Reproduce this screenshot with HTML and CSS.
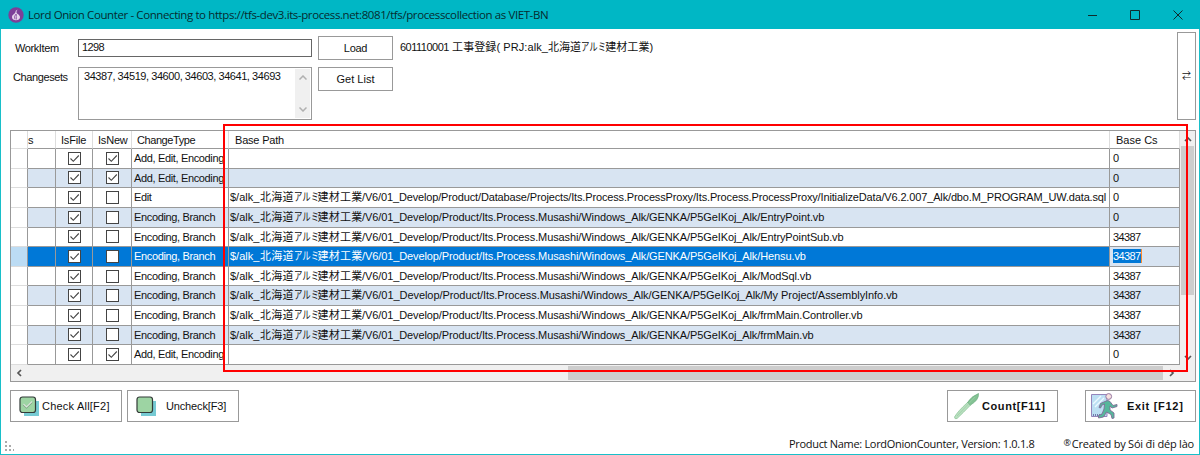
FILE: index.html
```html
<!DOCTYPE html>
<html lang="en">
<head>
<meta charset="utf-8">
<title>Lord Onion Counter</title>
<link rel="stylesheet" href="styles.css">
</head>
<body>
<svg class="defs" width="0" height="0">
  <symbol id="on" viewBox="0 0 13 13"><rect x=".5" y=".5" width="12" height="12" fill="#fff" stroke="#444"/><path d="M2.5 6.5 5.3 9.3 10.8 3.5" fill="none" stroke="#444" stroke-width="1.1"/></symbol>
  <symbol id="off" viewBox="0 0 13 13"><rect x=".5" y=".5" width="12" height="12" fill="#fff" stroke="#444"/></symbol>
</svg>
<div class="window">
  <header class="titlebar">
    <svg class="logo" viewBox="0 0 16 16"><circle cx="8" cy="8" r="7.7" fill="#7d3f98"/><path d="M9.6 2.5Q8.3 4 8.5 5.7C9 7 12 7.6 12 10.2C12 12.2 10.2 13.2 8 13.2S4 12.2 4 10.2C4 7.8 6.8 7 7.3 5.6Q7.2 3.6 9.6 2.5Z" fill="#e6d5ec"/><path d="M8 7Q5.4 9.4 7 12.3M8.4 7.2Q8 9.5 8.4 12.5" fill="none" stroke="#7d3f98" stroke-width=".8"/></svg>
    <span class="caption">Lord Onion Counter - Connecting to https://tfs-dev3.its-process.net:8081/tfs/processcollection as VIET-BN</span>
    <svg class="winbtns" viewBox="0 0 100 12"><path d="M1 6.5h9M43.5 1.5h9v9h-9zM86.5 1.5l9 9M95.500 1.500l-9 9" fill="none" stroke="#102a2c"/></svg>
  </header>

  <main class="client">
    <section class="form">
      <div class="fields">
        <label class="lbl wi">WorkItem</label>
        <div class="input num">1298</div>
        <div class="btn small"><span class="load">Load</span></div>
        <div class="item"><span class="num">601110001</span> 工事登録( PRJ:alk_北海道<span class="kana">アルミ</span>建材工業)</div>
        <label class="lbl cs">Changesets</label>
        <div class="area"><span class="list">34387, 34519, 34600, 34603, 34641, 34693</span>
          <div class="areabar"><svg viewBox="0 0 8 5"><path d="M.5 4.500 4 1l3.500 3.500"/></svg><svg viewBox="0 0 8 5"><path d="M.5.5 4 4 7.500.5"/></svg></div>
        </div>
        <div class="btn small"><span class="getlist">Get List</span></div>
      </div>
      <div class="btn swap">⇄</div>
    </section>

    <section class="gridbox">
      <div class="gridmain">
        <div class="table">
          <div class="row head"><i></i><b class="s">s</b><b class="f">IsFile</b><b class="n">IsNew</b><b class="t">ChangeType</b><b class="p">Base Path</b><b class="c">Base Cs</b></div>
          <div class="row"><i></i><b></b><b class="k"><svg><use href="#on"/></svg></b><b class="k"><svg><use href="#on"/></svg></b><b class="type">Add, Edit, Encoding</b><b></b><b class="num">0</b></div>
          <div class="row alt"><i></i><b></b><b class="k"><svg><use href="#on"/></svg></b><b class="k"><svg><use href="#on"/></svg></b><b class="type">Add, Edit, Encoding</b><b></b><b class="num">0</b></div>
          <div class="row"><i></i><b></b><b class="k"><svg><use href="#on"/></svg></b><b class="k"><svg><use href="#off"/></svg></b><b class="type">Edit</b><b class="path"><span class="pre">$/alk_</span><span class="jp">北海道<span class="kana">アルミ</span>建材工業</span><span class="long">/V6/01_Develop/Product/Database/Projects/Its.Process.ProcessProxy/Its.Process.ProcessProxy/InitializeData/V6.2.007_Alk/dbo.M_PROGRAM_UW.data.sql</span></b><b class="num">0</b></div>
          <div class="row alt"><i></i><b></b><b class="k"><svg><use href="#on"/></svg></b><b class="k"><svg><use href="#off"/></svg></b><b class="type">Encoding, Branch</b><b class="path"><span class="pre">$/alk_</span><span class="jp">北海道<span class="kana">アルミ</span>建材工業</span><span class="file">/V6/01_Develop/Product/Its.Process.Musashi/Windows_Alk/GENKA/P5GeIKoj_Alk/EntryPoint.vb</span></b><b class="num">0</b></div>
          <div class="row"><i></i><b></b><b class="k"><svg><use href="#on"/></svg></b><b class="k"><svg><use href="#off"/></svg></b><b class="type">Encoding, Branch</b><b class="path"><span class="pre">$/alk_</span><span class="jp">北海道<span class="kana">アルミ</span>建材工業</span><span class="file">/V6/01_Develop/Product/Its.Process.Musashi/Windows_Alk/GENKA/P5GeIKoj_Alk/EntryPointSub.vb</span></b><b class="num">34387</b></div>
          <div class="row sel"><i></i><b></b><b class="k"><svg><use href="#on"/></svg></b><b class="k"><svg><use href="#off"/></svg></b><b class="type">Encoding, Branch</b><b class="path"><span class="pre">$/alk_</span><span class="jp">北海道<span class="kana">アルミ</span>建材工業</span><span class="file">/V6/01_Develop/Product/Its.Process.Musashi/Windows_Alk/GENKA/P5GeIKoj_Alk/Hensu.vb</span></b><b class="num edit"><span>34387</span></b></div>
          <div class="row"><i></i><b></b><b class="k"><svg><use href="#on"/></svg></b><b class="k"><svg><use href="#off"/></svg></b><b class="type">Encoding, Branch</b><b class="path"><span class="pre">$/alk_</span><span class="jp">北海道<span class="kana">アルミ</span>建材工業</span><span class="file">/V6/01_Develop/Product/Its.Process.Musashi/Windows_Alk/GENKA/P5GeIKoj_Alk/ModSql.vb</span></b><b class="num">34387</b></div>
          <div class="row alt"><i></i><b></b><b class="k"><svg><use href="#on"/></svg></b><b class="k"><svg><use href="#off"/></svg></b><b class="type">Encoding, Branch</b><b class="path"><span class="pre">$/alk_</span><span class="jp">北海道<span class="kana">アルミ</span>建材工業</span><span class="file wide">/V6/01_Develop/Product/Its.Process.Musashi/Windows_Alk/GENKA/P5GeIKoj_Alk/My Project/AssemblyInfo.vb</span></b><b class="num">34387</b></div>
          <div class="row"><i></i><b></b><b class="k"><svg><use href="#on"/></svg></b><b class="k"><svg><use href="#off"/></svg></b><b class="type">Encoding, Branch</b><b class="path"><span class="pre">$/alk_</span><span class="jp">北海道<span class="kana">アルミ</span>建材工業</span><span class="file">/V6/01_Develop/Product/Its.Process.Musashi/Windows_Alk/GENKA/P5GeIKoj_Alk/frmMain.Controller.vb</span></b><b class="num">34387</b></div>
          <div class="row alt"><i></i><b></b><b class="k"><svg><use href="#on"/></svg></b><b class="k"><svg><use href="#off"/></svg></b><b class="type">Encoding, Branch</b><b class="path"><span class="pre">$/alk_</span><span class="jp">北海道<span class="kana">アルミ</span>建材工業</span><span class="file">/V6/01_Develop/Product/Its.Process.Musashi/Windows_Alk/GENKA/P5GeIKoj_Alk/frmMain.vb</span></b><b class="num">34387</b></div>
          <div class="row"><i></i><b></b><b class="k"><svg><use href="#on"/></svg></b><b class="k"><svg><use href="#on"/></svg></b><b class="type">Add, Edit, Encoding</b><b></b><b class="num">0</b></div>
        </div>
        <div class="vbar"><svg viewBox="0 0 8 6"><path d="M1 5 4 2l3 3"/></svg><div class="vthumb"></div><svg viewBox="0 0 8 6"><path d="M1 1l3 3 3-3"/></svg></div>
      </div>
      <div class="hbar"><svg viewBox="0 0 6 8"><path d="M5 1 2 4l3 3"/></svg><div class="hthumb"></div><svg viewBox="0 0 6 8"><path d="M1 1l3 3-3 3"/></svg></div>
      <div class="highlight"></div>
    </section>

    <section class="actions">
      <div class="btn act">
        <svg class="sq" viewBox="0 0 21 21"><path d="M5 5h15v15H5z" fill="#76cad3"/><rect x="1" y="1" width="15.500" height="15.500" rx="2.500" fill="#9dd4a3" stroke="#333b38" stroke-width="1.200"/><path d="M4.500 8.500 7.500 11.500 13 6" fill="none" stroke="#7d9f84" stroke-width="1.800"/><path d="M4.500 8 7.500 11 13 5.500" fill="none" stroke="#dce9dc" stroke-width="1.200"/></svg>
        <span class="chk">Check All[F2]</span></div>
      <div class="btn act">
        <svg class="sq" viewBox="0 0 21 21"><path d="M5 5h15v15H5z" fill="#76cad3"/><rect x="1" y="1" width="15.500" height="15.500" rx="2.500" fill="#9dd4a3" stroke="#333b38" stroke-width="1.200"/></svg>
        <span class="unchk">Uncheck[F3]</span></div>
      <div class="spacer"></div>
      <div class="btn act count">
        <svg class="pen" viewBox="0 0 28 28"><path d="M1.500 25Q5 19 14.500 10.500L17.500 13Q10 21 4 26.500Q1.500 27.500 1.500 25Z" fill="#b9dfbf" stroke="#91c89d" stroke-width=".8"/><path d="M14.500 10.500Q18 4.500 25.500 1.500Q26 8 17.500 13Z" fill="#83c293" stroke="#68aa7d" stroke-width=".7"/><path d="M4 24 22 5" stroke="#9bcfa6" stroke-width=".8"/></svg>
        <span>Count[F11]</span></div>
      <div class="btn act exit">
        <svg class="run" viewBox="0 0 28 28"><path d="M1.500 2.500h15.500v22H1.500z" fill="#bcdff3" stroke="#9585bb"/><path d="M3 12 11 4M5 15 14 6" stroke="#edf8ff" stroke-width="1.400"/><path d="M3 23h11" stroke="#7179ab" stroke-width="2" stroke-dasharray="1 1"/><path d="M15 9.500q3-2 5 0l3 4 4-1v2l-5 1.500-2-2v4l4 3v5l-2 .5-1-4-4.500-2.500-3 5-5 1v-2.500l3.500-1.500 2-5 .5-5-2.500 1-1.500 3-1.500-.5 1.500-4z" fill="#55b79b" stroke="#806b96" stroke-width=".9"/><circle cx="18.700" cy="4.500" r="2.900" fill="#f6e1df" stroke="#9576a2"/></svg>
        <span>Exit [F12]</span></div>
    </section>

    <footer class="status">
      <svg class="grip" viewBox="0 0 10 10"><path d="M1 0h2v2H1zM1 4h2v2H1zM5 4h2v2H5zM1 8h2v2H1zM5 8h2v2H5zM9 8h1v2H9z" fill="#aaa"/></svg>
      <span class="product">Product Name: LordOnionCounter, Version: 1.0.1.8</span>
      <span class="author"><small>®</small>Created by Sói đi dép lào</span>
    </footer>
  </main>
</div>
</body>
</html>
```

FILE: styles.css
```css
* { box-sizing: border-box; }
body { margin: 0; background: #fff; color: #111; font: 11px/14px "Liberation Sans", "Noto Sans CJK JP", sans-serif; }
svg { display: block; flex: none; }
.defs { position: absolute; }
.window { width: 1200px; height: 455px; display: flex; flex-direction: column; overflow: hidden; }
.titlebar { height: 29px; flex: none; display: flex; align-items: center; padding: 0 13px 0 8px; background: #00b7c5; color: #062b2f; }
.logo { width: 16px; height: 16px; }
.caption { margin-left: 4px; font: 11.5px/16px "Open Sans", sans-serif; white-space: nowrap; letter-spacing: -.4px; }
.winbtns { width: 100px; height: 12px; margin-left: auto; }

.client { flex: 1; display: flex; flex-direction: column; border: 1px solid #18bfc9; border-top: 0; padding: 3px 3px 0 9px; }
.form { display: flex; justify-content: space-between; height: 98px; }
.fields { display: grid; grid-template-columns: 68px 234px 75px 300px; column-gap: 0; grid-template-rows: 24px 53px; row-gap: 7px; padding-top: 4px; }
.fields .btn { margin-left: 6px; width: 75px; }
.fields .small { height: 24px; }
.lbl { padding-top: 5px; white-space: nowrap; letter-spacing: -.4px; }
.wi { padding-left: 5px; }
.cs { padding-left: 3px; padding-top: 3px; }
.num { letter-spacing: -.62px; }
.list { letter-spacing: -.44px; }
.input { height: 18px; margin-top: 3px; border: 1px solid #666; padding: 0 3px; }
.area { position: relative; border: 1px solid #999; padding: 1px 0 0 5px; white-space: nowrap; letter-spacing: 0; }
.areabar { position: absolute; top: 1px; right: 1px; bottom: 1px; width: 15px; background: #f0f0f0; display: flex; flex-direction: column; justify-content: space-between; align-items: center; padding: 6px 0; }
.areabar svg { width: 8px; height: 5px; fill: none; stroke: #b0b0b0; stroke-width: 1.5; }
.btn { border: 1px solid #999; background: #fff; display: flex; align-items: center; justify-content: center; white-space: nowrap; }
.load { letter-spacing: -.3px; }
.item { padding: 4px 0 0 13px; white-space: nowrap; letter-spacing: .08px; }
.item .num { letter-spacing: -.5px; }
.swap { width: 19px; height: 88px; font-size: 9px; }
.kana { display: inline-block; width: 24px; transform: scaleX(.76); transform-origin: left; white-space: nowrap; letter-spacing: 0; line-height: 14px; }

.gridbox { position: relative; height: 252px; border: 1px solid #999; background: #f0f0f0; width: 1186px; }
.gridmain { display: flex; height: 234px; }
.table { width: 1169px; background: #fff; }
.row { height: 19.636px; display: grid; grid-template-columns: 17px 28px 37px 39px 97px 881px 70px; }
.row.head { height: 18px; }
.row > * { border-right: 1px solid #999; border-bottom: 1px solid #999; font-weight: normal; font-style: normal; white-space: nowrap; overflow: hidden; padding-left: 2px; line-height: 19px; }
.row > i { border-bottom-color: #ddd; }
.row.head > * { line-height: 18px; border-right-color: #ddd; }
.alt > b { background: #d8e4f2; }
.sel > i { background: #bcdcf4; }
.sel > b { background: #0078d7; color: #fff; }
.row > .s { padding-left: 0; }
.row > .f, .row > .n { padding-left: 5px; letter-spacing: -.2px; }
.row > .t { padding-left: 5px; letter-spacing: -.42px; }
.row > .p { padding-left: 6px; letter-spacing: -.2px; }
.row > .c { padding-left: 6px; }
.row > .num { padding-left: 3px; }
.type { letter-spacing: -.35px; }
.row > .k { display: flex; align-items: center; justify-content: center; padding: 0; }
.k svg { width: 13px; height: 13px; }
.row > .path { display: flex; padding-left: 1px; }
.pre { width: 30px; }
.jp { width: 102px; letter-spacing: .2px; }
.file { letter-spacing: -.105px; }
.wide { letter-spacing: -.06px; }
.long { letter-spacing: -.148px; }
.row > .edit { background: #d8e4f2; }
.edit span { display: inline-block; height: 14px; line-height: 14px; background: #0078d7; border-right: 1px solid #ff8b2b; }
.vbar { width: 15px; display: flex; flex-direction: column; align-items: center; padding: 5px 0 4px; }
.vbar svg, .hbar svg { fill: none; stroke: #555; stroke-width: 1.7; }
.vbar svg { width: 8px; height: 6px; }
.vthumb { width: 13px; height: 149px; background: #cdcdcd; margin: 4px 0 auto; }
.hbar { height: 15px; display: flex; align-items: center; padding: 0 20px 0 5px; }
.hbar svg { width: 6px; height: 8px; }
.hthumb { width: 595px; height: 14px; background: #cdcdcd; margin: 0 6px 0 auto; }
.highlight { position: absolute; left: 212px; top: -7px; width: 965px; height: 248px; border: 2px solid #f00; }

.actions { display: flex; height: 32px; margin-top: 8px; width: 1186px; }
.act { width: 112px; justify-content: flex-start; padding-left: 8px; margin-right: 5px; }
.spacer { flex: 1; }
.sq { width: 21px; height: 21px; }
.chk { margin-left: 2px; letter-spacing: .22px; }
.unchk { margin-left: 9px; letter-spacing: -.15px; }
.count { width: 111px; margin-right: 27px; padding-left: 5px; font-weight: bold; }
.exit { width: 111px; margin-right: 0; padding-left: 4px; font-weight: bold; }
.pen, .run { width: 28px; height: 28px; }
.count span { margin-left: 1px; letter-spacing: .6px; }
.exit span { margin-left: 9px; letter-spacing: .7px; }

.status { display: flex; align-items: center; height: 18px; margin-top: 13px; margin-left: -6px; font: 11px/16px "Open Sans", sans-serif; white-space: nowrap; }
.grip { width: 10px; height: 10px; margin-top: 4px; }
.product { margin-left: 775px; letter-spacing: -.31px; }
.author { margin-left: auto; padding-right: 2px; letter-spacing: -.2px; }
.author small { font-size: 9px; margin-right: 1px; vertical-align: 2px; line-height: 8px; }
```
